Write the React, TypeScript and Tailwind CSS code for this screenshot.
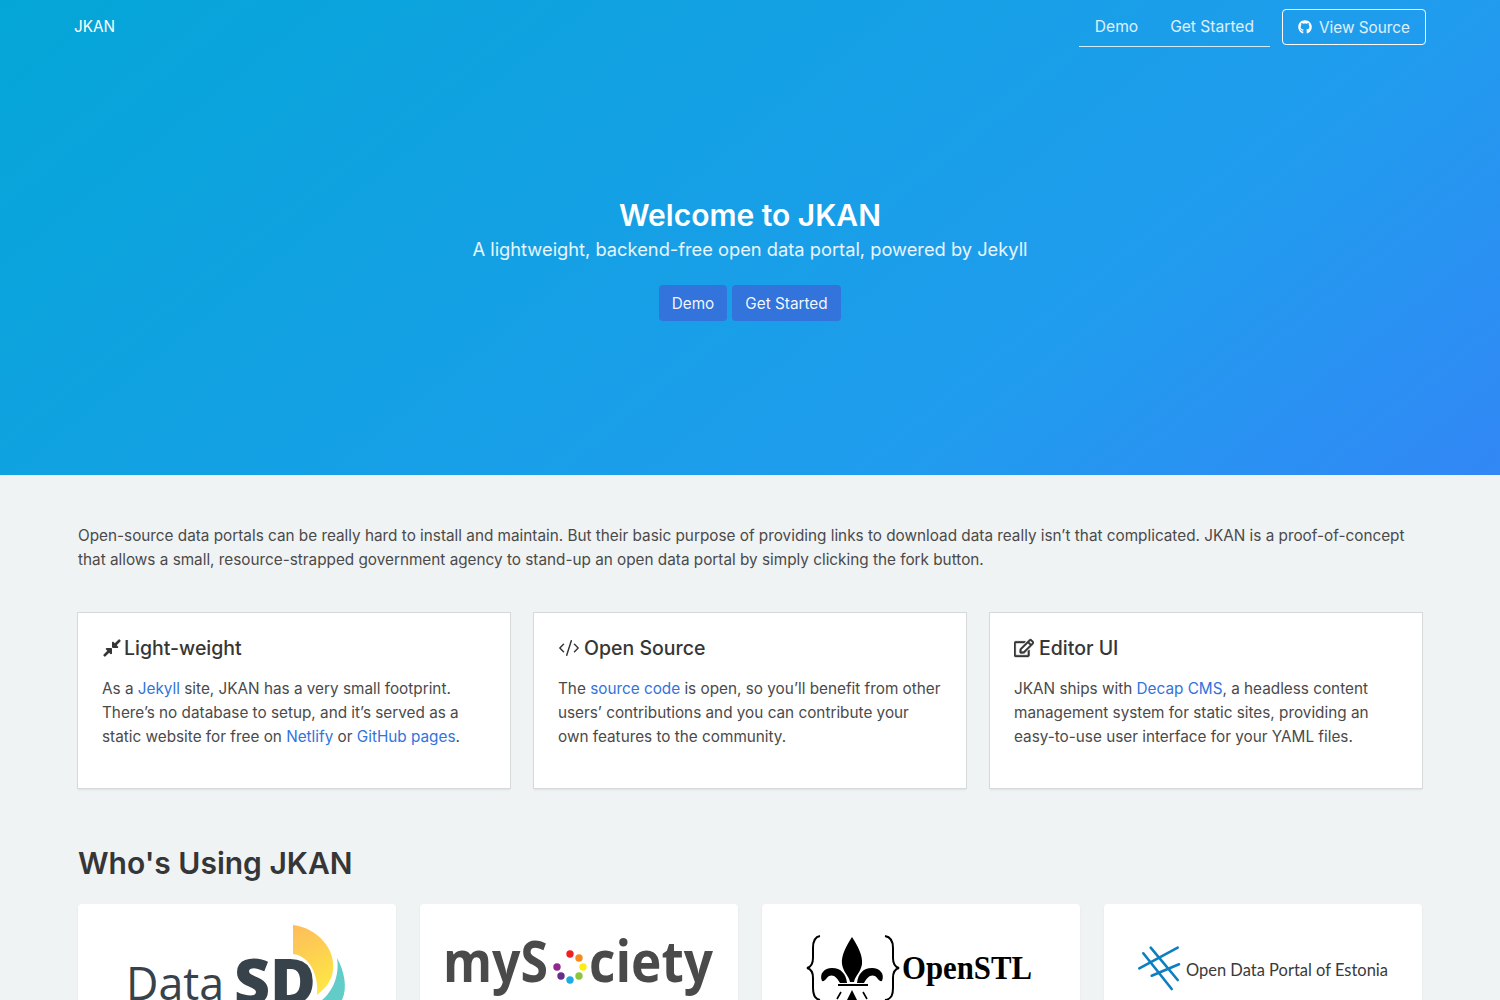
import React from 'react';
import { FaCompressAlt, FaGithub, FaRegEdit } from 'react-icons/fa';
import { CodeXml } from 'lucide-react';

const LINK = 'text-[#3273dc]';

const DataSdLogo = () => (
  <svg width="318" height="150" viewBox="0 0 318 150">
    <defs>
      <linearGradient id="sun" x1="0" y1="0" x2="0.3" y2="1">
        <stop offset="0" stopColor="#fdbc5c" />
        <stop offset="1" stopColor="#fee445" />
      </linearGradient>
    </defs>
    <text x="48" y="96" fontFamily="Open Sans, sans-serif" fontSize="46" fill="#37424a" textLength="98" lengthAdjust="spacingAndGlyphs">Data</text>
    <text x="156" y="101" fontFamily="Open Sans, sans-serif" fontSize="63" fontWeight="800" fill="#37424a" textLength="82" lengthAdjust="spacingAndGlyphs">SD</text>
    <path d="M215 21C240 24 258 46 255 66C254 76 248 84 239 91C241 72 232 52 215 50Z" fill="url(#sun)" />
    <path d="M259 54C266 66 270 84 264 96L244 96C254 88 262 72 259 54Z" fill="#62cdc8" />
  </svg>
);

const MySocietyLogo = () => (
  <svg width="318" height="150" viewBox="0 0 318 150">
    <g fontFamily="Open Sans, sans-serif" fontSize="58" fontWeight="700" fill="#4a4a4a">
      <text x="23" y="78" textLength="105" lengthAdjust="spacingAndGlyphs">myS</text>
      <text x="169" y="78" textLength="124" lengthAdjust="spacingAndGlyphs">ciety</text>
    </g>
    <circle cx="150" cy="50" r="3.7" fill="#ee2024" />
    <circle cx="159" cy="54" r="3.7" fill="#f58a1f" />
    <circle cx="163" cy="63" r="3.7" fill="#fdeb14" />
    <circle cx="159" cy="72" r="3.7" fill="#8cc63f" />
    <circle cx="150" cy="76" r="3.7" fill="#1cabe2" />
    <circle cx="141" cy="72" r="3.7" fill="#662d91" />
    <circle cx="137" cy="63" r="3.7" fill="#92278f" />
  </svg>
);

const OpenStlLogo = () => (
  <svg width="318" height="150" viewBox="0 0 318 150">
    <path d="M58 32C52 33 51 38 51 44V54C51 60 49 63 45 64C49 65 51 68 51 74V84C51 90 52 95 58 96" fill="none" stroke="#000" strokeWidth="2" />
    <path d="M123 32C129 33 131 38 131 44V54C131 60 133 63 137 64C133 65 131 68 131 74V84C131 90 130 95 123 96" fill="none" stroke="#000" strokeWidth="2" />
    <path d="M90 33C96 42 101 52 100 60C99 68 93 72 92 78H88C87 72 81 68 80 60C79 52 84 42 90 33Z" fill="#000" />
    <path d="M85 79C84 70 79 64 70 64C62 64 57 70 60 77C63 78 64 74 67 72C72 70 75 74 78 79Z" fill="#000" />
    <path d="M95 79C96 70 101 64 110 64C118 64 123 70 120 77C117 78 116 74 113 72C108 70 105 74 102 79Z" fill="#000" />
    <rect x="76" y="80" width="30" height="2" fill="#000" />
    <path d="M90 86L95 96H85Z" fill="#000" />
    <path d="M79 88L75 95M101 88L105 95" stroke="#000" strokeWidth="1.6" />
    <text x="140" y="75" fontFamily="Liberation Serif, serif" fontSize="34" fontWeight="700" fill="#000" textLength="130" lengthAdjust="spacingAndGlyphs">OpenSTL</text>
  </svg>
);

const EstoniaLogo = () => (
  <svg width="318" height="150" viewBox="0 0 318 150">
    <g stroke="#0b7fc0" strokeWidth="2.6" strokeLinecap="round">
      <path d="M46.7 43.7L73.7 76" />
      <path d="M39.3 49.3L67.7 85" />
      <path d="M35.3 64.3L73.7 43.7" />
      <path d="M47.7 71.7L75 60.3" />
    </g>
    <text x="82" y="72" fontFamily="Lato, sans-serif" fontSize="18" fill="#3a3a3a" textLength="202" lengthAdjust="spacingAndGlyphs">Open Data Portal of Estonia</text>
  </svg>
);

const LogoCard = ({ children }: { children: React.ReactNode }) => (
  <div className="h-[150px] bg-white rounded-[4px] shadow-[0_1px_2px_rgba(10,10,10,0.08)] overflow-hidden">
    {children}
  </div>
);

const FeatureCard = ({ icon, title, children }: { icon: React.ReactNode; title: string; children: React.ReactNode }) => (
  <div className="h-[175px] bg-white shadow-[0_0_0_1px_#d6d9da,0_2px_2px_rgba(10,10,10,0.08)] px-[24px] pt-[23px]">
    <h3 className="flex items-center text-[19.5px] leading-[24px] font-medium text-[#363636]">
      {icon}
      {title}
    </h3>
    <p className="mt-[9px] leading-[24px] pt-[8px]">{children}</p>
  </div>
);

export default function App() {
  return (
    <div className="h-[1000px] overflow-hidden bg-[#f0f3f4] font-['Inter',sans-serif] text-[15.3px] text-[#4a4a4a]">
      <section className="h-[475px] bg-[linear-gradient(141deg,#04a6d7_0%,#209cee_71%,#3287f5_100%)] text-white">
        <nav className="flex justify-between items-start px-[74px] h-[55px]">
          <a className="mt-[15px] leading-6">JKAN</a>
          <div className="flex items-start">
            <div className="flex h-[47px] border-b border-white/80 text-[15.6px] text-white/85 px-[16px] gap-[32px] pt-[15px] leading-6">
              <a>Demo</a>
              <a>Get Started</a>
            </div>
            <a className="ml-[12px] mt-[9px] h-[36px] w-[144px] rounded-[4px] border border-white flex items-center justify-center text-white/85 pt-[2px]">
              <FaGithub className="w-[14px] h-[14px] text-white mr-[7px] -mt-[3px]" />
              View Source
            </a>
          </div>
        </nav>
        <div className="flex flex-col items-center pt-[142px]">
          <h1 className="text-[30px] leading-[36px] font-semibold">Welcome to JKAN</h1>
          <p className="mt-[1px] text-[18.3px] leading-[30px] text-white/90">
            A lightweight, backend-free open data portal, powered by Jekyll
          </p>
          <div className="flex gap-[5px] mt-[21px]">
            <a className="h-[36px] w-[68px] pt-[2px] rounded-[4px] bg-[#3273dc] flex items-center justify-center text-white/95">Demo</a>
            <a className="h-[36px] w-[109px] pt-[2px] rounded-[4px] bg-[#3273dc] flex items-center justify-center text-white/95">Get Started</a>
          </div>
        </div>
      </section>

      <main className="w-[1344px] mx-auto pt-[49px]">
        <p className="leading-[24px]">
          Open-source data portals can be really hard to install and maintain. But their basic purpose of providing links to download data really isn’t that complicated. JKAN is a proof-of-concept that allows a small, resource-strapped government agency to stand-up an open data portal by simply clicking the fork button.
        </p>

        <div className="grid grid-cols-3 gap-[24px] mt-[41px]">
          <FeatureCard icon={<FaCompressAlt className="w-[20px] h-[20px] mr-[2px]" />} title="Light-weight">
            As a <a className={LINK}>Jekyll</a> site, JKAN has a very small footprint. There’s no database to setup, and it’s served as a static website for free on <a className={LINK}>Netlify</a> or <a className={LINK}>GitHub pages</a>.
          </FeatureCard>
          <FeatureCard icon={<CodeXml className="w-[22px] h-[22px] mr-[4px]" strokeWidth={1.6} />} title="Open Source">
            The <a className={LINK}>source code</a> is open, so you’ll benefit from other users’ contributions and you can contribute your own features to the community.
          </FeatureCard>
          <FeatureCard icon={<FaRegEdit className="w-[20px] h-[20px] mr-[5px]" stroke="currentColor" strokeWidth={14} />} title="Editor UI">
            JKAN ships with <a className={LINK}>Decap CMS</a>, a headless content management system for static sites, providing an easy-to-use user interface for your YAML files.
          </FeatureCard>
        </div>

        <h2 className="mt-[56px] text-[30px] leading-[38px] font-semibold text-[#363636]">Who's Using JKAN</h2>

        <div className="grid grid-cols-4 gap-[24px] mt-[22px]">
          <LogoCard><DataSdLogo /></LogoCard>
          <LogoCard><MySocietyLogo /></LogoCard>
          <LogoCard><OpenStlLogo /></LogoCard>
          <LogoCard><EstoniaLogo /></LogoCard>
        </div>
      </main>
    </div>
  );
}
